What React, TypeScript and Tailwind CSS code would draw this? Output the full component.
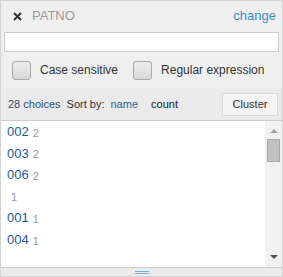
import React from "react"

const rows = [
  { name: "002", count: 2 },
  { name: "003", count: 2 },
  { name: "006", count: 2 },
  { name: "", count: 1 },
  { name: "001", count: 1 },
  { name: "004", count: 1 },
]

const Checkbox = ({ label }: { label: string }) => (
  <div className="flex items-center">
    <div className="h-[19px] w-[19px] rounded-[3px] border border-[#a9a9a9] bg-gradient-to-b from-[#ececec] to-[#d9d9d9]" />
    <span className="ml-[9px] text-[12px] text-[#333]">{label}</span>
  </div>
)

export default function App() {
  return (
    <div
      className="flex h-[277px] w-[283px] flex-col border border-[#d4d4d4] bg-[#efefef]"
      style={{ fontFamily: '"Liberation Sans", Arial, sans-serif' }}
    >
      {/* header */}
      <div className="flex h-[30px] shrink-0 items-center justify-between pl-[12px] pr-[6px]">
        <div className="flex items-center">
          <svg width="9" height="9" viewBox="0 0 9 9" className="mt-[1px]">
            <path d="M1 1L8 8M8 1L1 8" stroke="#333" strokeWidth="2" />
          </svg>
          <span className="ml-[10px] text-[13px] text-[#9a9a9a]">PATNO</span>
        </div>
        <span className="text-[13px] text-[#3a8dc8]">change</span>
      </div>

      {/* filter */}
      <div className="mx-[3px] mt-[1px] h-[20px] shrink-0 border border-[#cfcfcf] bg-white" />
      <div className="flex h-[36px] shrink-0 items-center gap-[15px] pl-[11px]">
        <Checkbox label="Case sensitive" />
        <Checkbox label="Regular expression" />
      </div>

      {/* choices bar */}
      <div className="flex h-[32px] shrink-0 items-center justify-between bg-[#eaeaea] pl-[7px] pr-[4px]">
        <div className="flex items-center text-[11px]">
          <span className="text-[#2e4f6e]">28 choices</span>
          <span className="ml-[6px] text-[#333]">Sort by:</span>
          <span className="ml-[6px] text-[#2a6496]">name</span>
          <span className="ml-[13px] text-[#222]">count</span>
        </div>
        <button className="h-[23px] w-[56px] border border-[#d9d9d9] bg-[#f5f5f5] text-[11px] text-[#333]">
          Cluster
        </button>
      </div>

      {/* list */}
      <div className="flex min-h-0 flex-1 border-y border-[#cccccc] bg-white">
        <div className="flex-1 pl-[6px]">
          {rows.map((r, i) => (
            <div key={i} className="flex h-[21.6px] items-center">
              <span className="text-[13px] text-[#1d5a92]">{r.name}</span>
              <span className="ml-[4px] mt-[2px] text-[11px] text-[#999]">{r.count}</span>
            </div>
          ))}
        </div>
        <div className="flex w-[17px] flex-col items-center bg-[#f1f1f1]">
          <div className="mt-[8px] h-0 w-0 border-x-[4px] border-b-[4px] border-x-transparent border-b-[#a3a3a3]" />
          <div className="mt-[6px] h-[23px] w-[13px] border border-[#a8a8a8] bg-[#c1c1c1]" />
          <div className="flex-1" />
          <div className="mb-[8px] h-0 w-0 border-x-[4px] border-t-[4px] border-x-transparent border-t-[#505050]" />
        </div>
      </div>

      {/* resize handle */}
      <div className="flex h-[8px] shrink-0 flex-col items-center justify-center gap-[1px] bg-[#ebebeb]">
        <div className="h-px w-[14px] bg-[#8aa8e0]" />
        <div className="h-px w-[14px] bg-[#8aa8e0]" />
      </div>
    </div>
  )
}
